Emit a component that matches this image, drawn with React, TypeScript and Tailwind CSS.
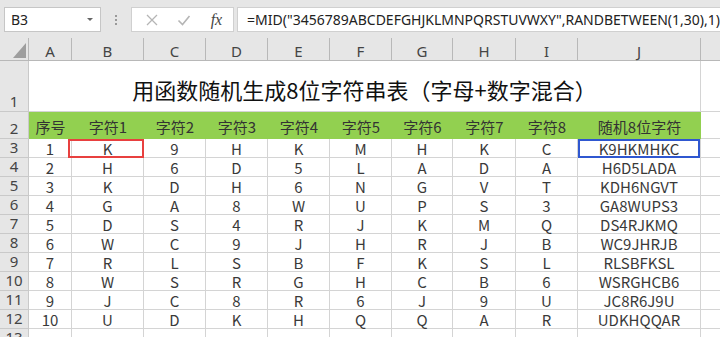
import React from "react";

const cols = ["A", "B", "C", "D", "E", "F", "G", "H", "I", "J", ""];
const widths = "grid-cols-[29px_43px_72px_62px_62px_62px_62px_61px_63px_62px_123px_1fr]";

const headers = ["序号", "字符1", "字符2", "字符3", "字符4", "字符5", "字符6", "字符7", "字符8", "随机8位字符"];

const data: string[][] = [
  ["1", "K", "9", "H", "K", "M", "H", "K", "C", "K9HKMHKC"],
  ["2", "H", "6", "D", "5", "L", "A", "D", "A", "H6D5LADA"],
  ["3", "K", "D", "H", "6", "N", "G", "V", "T", "KDH6NGVT"],
  ["4", "G", "A", "8", "W", "U", "P", "S", "3", "GA8WUPS3"],
  ["5", "D", "S", "4", "R", "J", "K", "M", "Q", "DS4RJKMQ"],
  ["6", "W", "C", "9", "J", "H", "R", "J", "B", "WC9JHRJB"],
  ["7", "R", "L", "S", "B", "F", "K", "S", "L", "RLSBFKSL"],
  ["8", "W", "S", "R", "G", "H", "C", "B", "6", "WSRGHCB6"],
  ["9", "J", "C", "8", "R", "6", "J", "9", "U", "JC8R6J9U"],
  ["10", "U", "D", "K", "H", "Q", "Q", "A", "R", "UDKHQQAR"],
];

const cellFont = "font-['Noto_Sans_CJK_SC',sans-serif]";
const uiFont = "font-['Noto_Sans','Noto_Sans_CJK_SC',sans-serif]";

function RowHead({ n, h }: { n: string; h: string }) {
  return (
    <div
      className={`${h} ${uiFont} flex items-end justify-center bg-[#e6e6e6] border-r border-b border-[#c9c9c9] text-[15px] leading-[19px] text-[#444]`}
    >
      {n}
    </div>
  );
}

export default function App() {
  return (
    <div className="w-[720px] h-[337px] overflow-hidden bg-white">
      {/* formula bar */}
      <div className={`h-[38px] bg-[#e6e6e6] flex items-start pt-[7px] pl-[4px] ${uiFont}`}>
        <div className="w-[103px] h-[25px] bg-white border border-[#c6c6c6] flex items-center justify-between pl-[6px] pr-[7px] text-[14px] text-[#222]">
          <span>B3</span>
          <span className="w-0 h-0 border-l-[3px] border-r-[3px] border-t-[3px] border-l-transparent border-r-transparent border-t-[#666]" />
        </div>
        <div className="w-[32px] h-[25px] flex flex-col items-center justify-center gap-[2px]">
          <span className="w-[2px] h-[2px] bg-[#999]" />
          <span className="w-[2px] h-[2px] bg-[#999]" />
          <span className="w-[2px] h-[2px] bg-[#999]" />
        </div>
        <div className="w-[111px] h-[25px] bg-white border border-[#d0d0d0] flex items-center">
          <svg width="14" height="14" viewBox="0 0 14 14" className="ml-[13px]">
            <path d="M2 2 L12 12 M12 2 L2 12" stroke="#b5b5b5" strokeWidth="1.3" fill="none" />
          </svg>
          <svg width="14" height="14" viewBox="0 0 14 14" className="ml-[18px]">
            <path d="M1.5 7.5 L5.5 11.5 L12.5 3" stroke="#b5b5b5" strokeWidth="1.6" fill="none" />
          </svg>
          <span className="ml-[20px] font-['Liberation_Serif',serif] italic text-[16px] text-[#444]">fx</span>
        </div>
        <div className="ml-[3px] flex-1 h-[25px] bg-white border-y border-l border-[#d0d0d0] flex items-center pl-[9px] text-[14px] text-[#222] whitespace-nowrap">
          =MID("3456789ABCDEFGHJKLMNPQRSTUVWXY",RANDBETWEEN(1,30),1)
        </div>
      </div>

      {/* sheet */}
      <div className={`grid ${widths}`}>
        {/* corner + column headers */}
        <div className="h-[23px] bg-[#e6e6e6] border-r border-b border-[#b8b8b8] flex items-end justify-end pr-[2px] pb-[2px]">
          <div className="w-[13px] h-[15px] bg-[#9e9e9e] [clip-path:polygon(100%_0,100%_100%,0_100%)]" />
        </div>
        {cols.map((c, i) => (
          <div
            key={i}
            className={`h-[23px] bg-[#e6e6e6] border-b border-[#b8b8b8] ${i < 10 ? "border-r" : ""} ${uiFont} flex items-center justify-center text-[15px] text-[#444] pt-[4px]`}
          >
            {c}
          </div>
        ))}

        {/* row 1 title */}
        <RowHead n="1" h="h-[51px]" />
        <div
          className={`col-span-10 h-[51px] border-r border-b border-[#d4d4d4] flex items-end justify-center pb-[8px] ${cellFont} text-[22px] leading-[28px] text-[#111]`}
        >
          用函数随机生成8位字符串表（字母+数字混合）
        </div>
        <div className="h-[51px] border-b border-[#d4d4d4]" />

        {/* row 2 headers */}
        <RowHead n="2" h="h-[27px]" />
        {headers.map((t, i) => (
          <div
            key={i}
            className={`h-[27px] bg-[#92d050] flex items-end justify-center pb-[1px] ${cellFont} text-[15px] leading-[22px] text-[#333]`}
          >
            {t}
          </div>
        ))}
        <div className="h-[27px] border-b border-[#d4d4d4]" />

        {/* data rows */}
        {data.map((row, r) => (
          <React.Fragment key={r}>
            <RowHead n={String(r + 3)} h="h-[19px]" />
            {row.map((v, c) => (
              <div
                key={c}
                className={`relative h-[19px] border-r border-b border-[#d4d4d4] flex items-center justify-center ${cellFont} text-[15px] leading-[19px] text-[#3a3a3a]`}
              >
                {v}
                {r === 0 && c === 1 && (
                  <div className="absolute left-[-4px] right-[-1px] top-0 bottom-[-1px] border-2 border-[#e8403f]" />
                )}
                {r === 0 && c === 9 && (
                  <div className="absolute left-0 right-0 top-0 bottom-[-1px] border-2 border-[#2f57d0]" />
                )}
              </div>
            ))}
            <div className="h-[19px] border-b border-[#d4d4d4]" />
          </React.Fragment>
        ))}

        {/* row 13 partial */}
        <RowHead n="13" h="h-[19px]" />
        {cols.map((_, i) => (
          <div key={i} className={`h-[19px] ${i < 10 ? "border-r" : ""} border-b border-[#d4d4d4]`} />
        ))}
      </div>
    </div>
  );
}
